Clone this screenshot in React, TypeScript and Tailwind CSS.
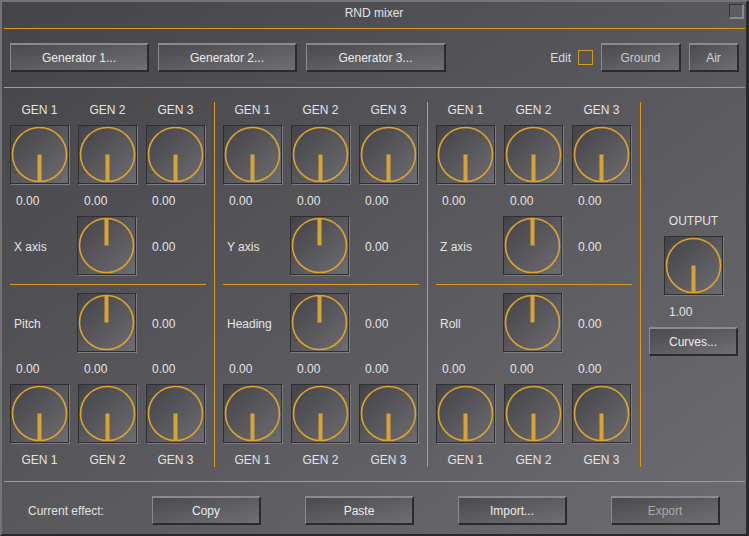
import React from "react";

const ORANGE = "bg-[#dc9a12]";

function Btn({
  children,
  className = "",
  tone = "text-[#ececec]",
}: {
  children: React.ReactNode;
  className?: string;
  tone?: string;
}) {
  return (
    <div
      className={
        "flex h-[29px] shrink-0 items-center justify-center border-t-2 border-l border-r-2 border-b-2 border-t-[#8b8a8f] border-l-[#8b8a8f] border-r-[#2b2b2e] border-b-[#2b2b2e] bg-linear-to-br from-[#4b4a4f] to-[#706f74] pt-px text-[12px] leading-[14px] " +
        tone +
        " " +
        className
      }
    >
      {children}
    </div>
  );
}

function Knob({ up = false }: { up?: boolean }) {
  return (
    <div className="h-[59px] w-[59px] shrink-0 border border-[#2f2f33] bg-linear-to-br from-[#444348] to-[#6d6c71] shadow-[1px_1px_0_#7d7c81]">
      <svg width="57" height="57" viewBox="0 0 57 57" className="block">
        <circle cx="28.5" cy="28.5" r="27" fill="none" stroke="#dca22c" strokeWidth="1.6" />
        {up ? (
          <rect x="26.5" y="1.5" width="4" height="27" fill="#d7a336" />
        ) : (
          <rect x="26.5" y="28.5" width="4" height="27" fill="#d7a336" />
        )}
      </svg>
    </div>
  );
}

function GenLabels() {
  return (
    <div className="flex gap-[9px] leading-[14px]">
      {[1, 2, 3].map((i) => (
        <div key={i} className="w-[59px] text-center">
          GEN {i}
        </div>
      ))}
    </div>
  );
}

function GenKnobs() {
  return (
    <div className="flex gap-[9px]">
      <Knob />
      <Knob />
      <Knob />
    </div>
  );
}

function Values() {
  return (
    <div className="flex gap-[9px] leading-[14px]">
      {[1, 2, 3].map((i) => (
        <div key={i} className="w-[59px] pl-[6px]">
          0.00
        </div>
      ))}
    </div>
  );
}

function AxisRow({ label }: { label: string }) {
  return (
    <div className="flex h-[59px] items-center">
      <span className="w-[67px] pt-[2px] pl-[4px]">{label}</span>
      <Knob up />
      <span className="pt-[2px] pl-[16px]">0.00</span>
    </div>
  );
}

function Section({ axis, rot, last = false }: { axis: string; rot: string; last?: boolean }) {
  return (
    <>
      <div className="flex w-[204px] shrink-0 flex-col">
        <div className="mt-[15px]">
          <GenLabels />
        </div>
        <div className="mt-[8px]">
          <GenKnobs />
        </div>
        <div className="mt-[10px]">
          <Values />
        </div>
        <div className="mt-[8px]">
          <AxisRow label={axis} />
        </div>
        <div className={"mt-[9px] h-px w-[196px] " + ORANGE} />
        <div className="mt-[8px]">
          <AxisRow label={rot} />
        </div>
        <div className="mt-[10px]">
          <Values />
        </div>
        <div className="mt-[8px]">
          <GenKnobs />
        </div>
        <div className="mt-[10px]">
          <GenLabels />
        </div>
      </div>
      <div className={(last ? "" : "mr-[8px] ") + "mt-[14px] h-[365px] w-px shrink-0 " + ORANGE} />
    </>
  );
}

export default function App() {
  return (
    <div className="flex h-[536px] w-[749px] flex-col border-t-2 border-l-2 border-r-[3px] border-b-2 border-t-[#747378] border-l-[#747378] border-r-[#29292c] border-b-[#29292c] bg-linear-to-br from-[#454449] to-[#6d6c71] font-['Liberation_Sans',Arial,sans-serif] text-[12px] text-[#e4e4e4]">
      {/* title bar */}
      <div className="relative h-[26px] shrink-0 pt-[4px] text-center leading-[14px] text-[#e2e2e2]">
        RND mixer
        <div className="absolute right-[2px] top-[2px] h-[15px] w-[15px] border-t border-l border-r-2 border-b-2 border-t-[#333236] border-l-[#333236] border-r-[#8b8a8f] border-b-[#8b8a8f] bg-[#5e5d62]" />
      </div>
      <div className={"ml-[2px] mr-px h-px shrink-0 " + ORANGE} />

      {/* toolbar */}
      <div className="flex shrink-0 items-center pt-[14px] pb-[15px] pl-[8px] pr-[7px]">
        <div className="flex gap-[9px]">
          <Btn className="w-[139px]">Generator 1...</Btn>
          <Btn className="w-[139px]">Generator 2...</Btn>
          <Btn className="w-[140px]">Generator 3...</Btn>
        </div>
        <div className="ml-auto flex items-center">
          <span className="pt-px text-[#dedede]">Edit</span>
          <div className="ml-[7px] h-[15px] w-[15px] border border-[#d39a2a]" />
          <Btn className="ml-[8px] w-[80px]" tone="text-[#c9c9cb]">
            Ground
          </Btn>
          <Btn className="ml-[8px] w-[50px]" tone="text-[#d2d2d4]">
            Air
          </Btn>
        </div>
      </div>
      <div className={"ml-[2px] mr-px h-px shrink-0 " + ORANGE} />

      {/* main */}
      <div className="flex h-[393px] shrink-0 pl-[8px]">
        <Section axis="X axis" rot="Pitch" />
        <Section axis="Y axis" rot="Heading" />
        <Section axis="Z axis" rot="Roll" last />
        <div className="flex flex-1 flex-col items-center">
          <div className="mt-[126px] flex w-[59px] flex-col">
            <div className="text-center leading-[14px]">OUTPUT</div>
            <div className="mt-[8px]">
              <Knob />
            </div>
            <div className="mt-[10px] pl-[5px] leading-[14px]">1.00</div>
          </div>
          <Btn className="mt-[8px] w-[89px]">Curves...</Btn>
        </div>
      </div>
      <div className={"ml-[2px] mr-px h-px shrink-0 " + ORANGE} />

      {/* bottom */}
      <div className="flex flex-1 items-start pt-[14px]">
        <div className="flex h-[29px] w-[150px] shrink-0 items-center pt-px pl-[26px] text-[#e0e0e0]">Current effect:</div>
        <div className="flex gap-[44px]">
          <Btn className="w-[109px]">Copy</Btn>
          <Btn className="w-[109px]">Paste</Btn>
          <Btn className="w-[109px]">Import...</Btn>
          <Btn className="w-[109px]" tone="text-[#a9a9ab]">
            Export
          </Btn>
        </div>
      </div>
    </div>
  );
}
